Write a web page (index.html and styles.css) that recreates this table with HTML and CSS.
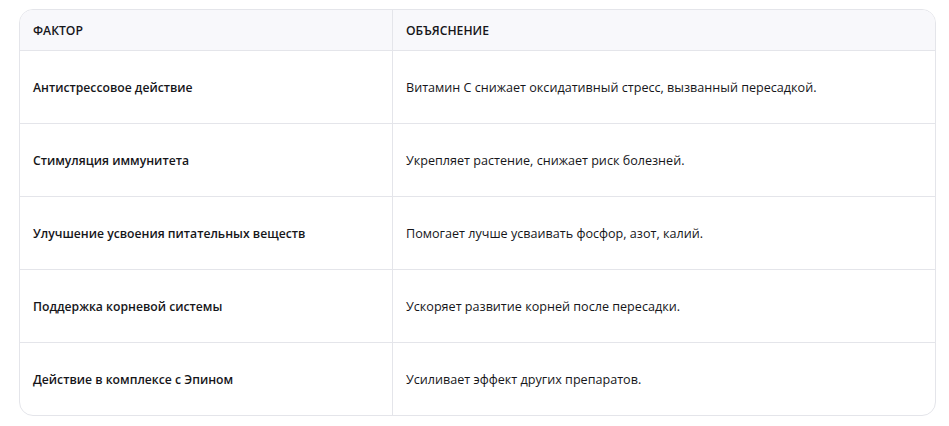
FILE: index.html
```html
<!DOCTYPE html>
<html lang="ru">
<head>
<meta charset="utf-8">
<link rel="stylesheet" href="styles.css">
</head>
<body>
<div class="wrap">
  <table class="grid">
    <thead>
      <tr><th class="c1">ФАКТОР</th><th class="c2">ОБЪЯСНЕНИЕ</th></tr>
    </thead>
    <tbody>
      <tr><td class="name">Антистрессовое действие</td><td class="desc">Витамин C снижает оксидативный стресс, вызванный пересадкой.</td></tr>
      <tr><td class="name">Стимуляция иммунитета</td><td class="desc">Укрепляет растение, снижает риск болезней.</td></tr>
      <tr><td class="name">Улучшение усвоения питательных веществ</td><td class="desc">Помогает лучше усваивать фосфор, азот, калий.</td></tr>
      <tr><td class="name">Поддержка корневой системы</td><td class="desc">Ускоряет развитие корней после пересадки.</td></tr>
      <tr><td class="name">Действие в комплексе с Эпином</td><td class="desc">Усиливает эффект других препаратов.</td></tr>
    </tbody>
  </table>
</div>
</body>
</html>
```

FILE: styles.css
```css
html, body {
  margin: 0;
  padding: 0;
  background: #ffffff;
}
.wrap {
  padding: 9px 13px 0 19px;
}
.grid {
  width: 917px;
  border-collapse: separate;
  border-spacing: 0;
  border: 1px solid #e4e5ea;
  border-radius: 14px;
  overflow: hidden;
  font-family: "Open Sans", "Noto Sans", sans-serif;
  font-size: 12.2px;
  color: #16161a;
  table-layout: fixed;
}
.c1 { width: 347px; }
th {
  background: #f8f8fb;
  text-align: left;
  font-weight: 600;
  height: 40px;
  padding: 0 12px 0 13px;
  border-bottom: 1px solid #e4e5ea;
  vertical-align: middle;
}
td {
  height: 72px;
  padding: 0 12px 0 13px;
  border-bottom: 1px solid #e4e5ea;
  vertical-align: middle;
}
tbody tr:last-child td { border-bottom: none; }
th.c1, td.name { border-right: 1px solid #e4e5ea; }
td.name { font-weight: 600; }
td.desc { font-size: 12.6px; }
```
